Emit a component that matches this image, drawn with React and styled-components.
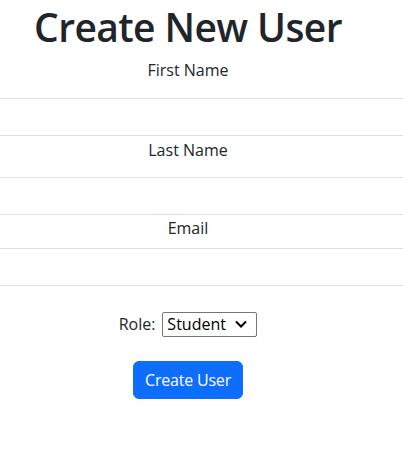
import React from "react";
import styled, { createGlobalStyle } from "styled-components";

const GlobalStyle = createGlobalStyle`
  body {
    margin: 0;
    font-family: "Open Sans", "Liberation Sans", sans-serif;
    font-size: 16px;
    line-height: 1.5;
    color: #212529;
    background: #fff;
    overflow: hidden;
  }
`;

const Page = styled.div`
  width: 376px;
  display: flex;
  flex-direction: column;
  align-items: center;
`;

const Title = styled.h1`
  margin: 4px 0 7px;
  font-size: 39px;
  font-weight: 600;
  letter-spacing: -0.6px;
  line-height: 1.2;
  text-align: center;
`;

const Field = styled.div`
  width: 100%;
  display: flex;
  flex-direction: column;
  align-items: center;
  margin-top: ${(p) => p.$top}px;
`;

const Label = styled.label`
  display: block;
  line-height: 24px;
  margin-bottom: ${(p) => p.$gap}px;
`;

const Input = styled.input`
  align-self: flex-start;
  box-sizing: border-box;
  width: 403px;
  height: 38px;
  margin: 0;
  padding: 6px 12px;
  border: none;
  border-top: 1px solid #dee2e6;
  border-bottom: 1px solid #dee2e6;
  font: inherit;
  outline: none;
`;

const RoleRow = styled.div`
  display: flex;
  align-items: center;
  gap: 7px;
  margin-top: 26px;
`;

const SelectWrap = styled.div`
  position: relative;
  display: flex;
`;

const Select = styled.select`
  appearance: none;
  box-sizing: border-box;
  width: 95px;
  height: 25px;
  padding: 0 20px 0 4px;
  border: 1px solid #767676;
  border-radius: 2px;
  background: #fff;
  color: #000;
  font: inherit;
  line-height: 23px;
`;

const Chevron = styled.svg`
  position: absolute;
  right: 10px;
  top: 8px;
  pointer-events: none;
`;

const Button = styled.button`
  margin-top: 24px;
  padding: 6px 11px;
  border: 1px solid #0d6efd;
  border-radius: 6px;
  background: #0d6efd;
  color: #fff;
  font: inherit;
  letter-spacing: -0.2px;
  line-height: 24px;
  cursor: pointer;
`;

const App = () => {
  return (
    <>
      <GlobalStyle />
      <Page>
        <Title>Create New User</Title>
        <Field $top={0}>
          <Label $gap={16}>First Name</Label>
          <Input type="text" />
        </Field>
        <Field $top={2}>
          <Label $gap={15}>Last Name</Label>
          <Input type="text" />
        </Field>
        <Field $top={1}>
          <Label $gap={8}>Email</Label>
          <Input type="email" />
        </Field>
        <RoleRow>
          <span>Role:</span>
          <SelectWrap>
            <Select defaultValue="student">
              <option value="student">Student</option>
              <option value="teacher">Teacher</option>
              <option value="admin">Admin</option>
            </Select>
            <Chevron width="12" height="8" viewBox="0 0 12 8">
              <path d="M1 1.5 L6 6.5 L11 1.5" fill="none" stroke="#000" strokeWidth="2" />
            </Chevron>
          </SelectWrap>
        </RoleRow>
        <Button>Create User</Button>
      </Page>
    </>
  );
};

export default App;
